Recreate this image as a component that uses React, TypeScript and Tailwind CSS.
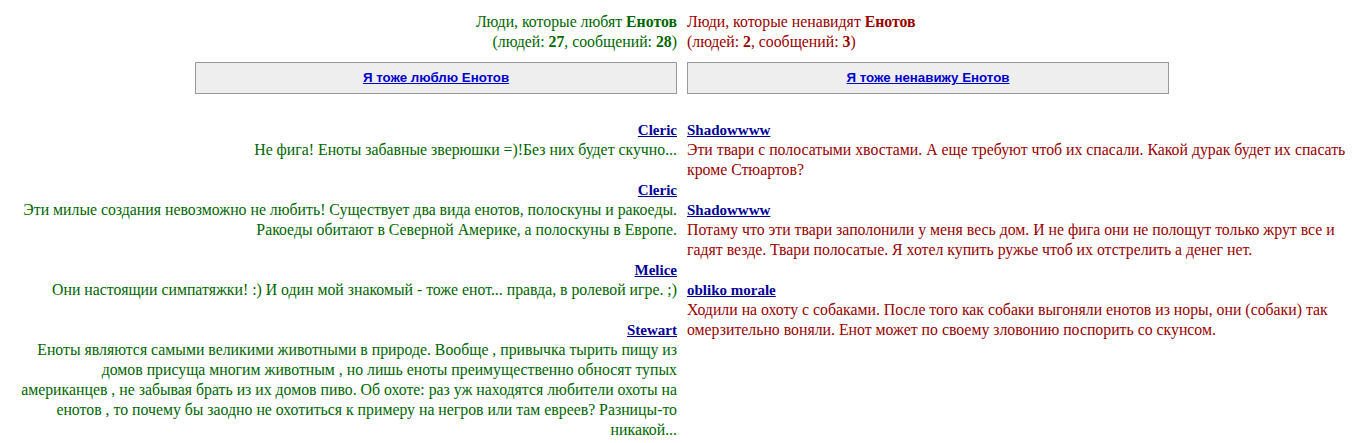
import React from 'react';

interface Comment {
  author: string;
  text: string;
}

const lovers: Comment[] = [
  { author: 'Cleric', text: 'Не фига! Еноты забавные зверюшки =)!Без них будет скучно...' },
  {
    author: 'Cleric',
    text: 'Эти милые создания невозможно не любить! Существует два вида енотов, полоскуны и ракоеды. Ракоеды обитают в Северной Америке, а полоскуны в Европе.',
  },
  { author: 'Melice', text: 'Они настоящии симпатяжки! :) И один мой знакомый - тоже енот... правда, в ролевой игре. ;)' },
  {
    author: 'Stewart',
    text: 'Еноты являются самыми великими животными в природе. Вообще , привычка тырить пищу из домов присуща многим животным , но лишь еноты преимущественно обносят тупых американцев , не забывая брать из их домов пиво. Об охоте: раз уж находятся любители охоты на енотов , то почему бы заодно не охотиться к примеру на негров или там евреев? Разницы-то никакой...',
  },
];

const haters: Comment[] = [
  {
    author: 'Shadowwww',
    text: 'Эти твари с полосатыми хвостами. А еще требуют чтоб их спасали. Какой дурак будет их спасать кроме Стюартов?',
  },
  {
    author: 'Shadowwww',
    text: 'Потаму что эти твари заполонили у меня весь дом. И не фига они не полощут только жрут все и гадят везде. Твари полосатые. Я хотел купить ружье чтоб их отстрелить а денег нет.',
  },
  {
    author: 'obliko morale',
    text: 'Ходили на охоту с собаками. После того как собаки выгоняли енотов из норы, они (собаки) так омерзительно воняли. Енот может по своему зловонию поспорить со скунсом.',
  },
];

function CommentList({ items, side }: { items: Comment[]; side: 'left' | 'right' }) {
  const isLeft = side === 'left';
  return (
    <div className={isLeft ? 'text-right' : 'text-left'}>
      {items.map((c, i) => (
        <div key={i} className="mb-[20px]">
          <a href="#" className="text-[15px] font-bold text-[#000099] underline">
            {c.author}
          </a>
          <div className={isLeft ? 'text-[#006600]' : 'text-[#990000]'}>{c.text}</div>
        </div>
      ))}
    </div>
  );
}

export default function App() {
  return (
    <div className="min-h-[443px] bg-white font-['Liberation_Serif','Times_New_Roman',serif] text-[15.8px] leading-[20px] pl-[14px] pr-[10px] pt-[12px]">
      {/* заголовки */}
      <div className="flex gap-[10px]">
        <div className="w-1/2 text-right text-[#006600]">
          Люди, которые любят <b>Енотов</b>
          <br />
          (людей: <b>27</b>, сообщений: <b>28</b>)
        </div>
        <div className="w-1/2 text-left text-[#990000]">
          Люди, которые ненавидят <b>Енотов</b>
          <br />
          (людей: <b>2</b>, сообщений: <b>3</b>)
        </div>
      </div>

      {/* кнопки */}
      <div className="flex gap-[10px] mt-[10px]">
        <div className="w-1/2 flex justify-end">
          <div className="w-[482px] h-[32px] bg-[#eeeeee] border border-[#999999] flex items-center justify-center">
            <a href="#" className="font-['Liberation_Sans',Arial,sans-serif] text-[13.3px] font-bold text-[#0000cc] underline">
              Я тоже люблю Енотов
            </a>
          </div>
        </div>
        <div className="w-1/2 flex justify-start">
          <div className="w-[482px] h-[32px] bg-[#eeeeee] border border-[#999999] flex items-center justify-center">
            <a href="#" className="font-['Liberation_Sans',Arial,sans-serif] text-[13.3px] font-bold text-[#0000cc] underline">
              Я тоже ненавижу Енотов
            </a>
          </div>
        </div>
      </div>

      {/* сообщения */}
      <div className="flex gap-[10px] mt-[26px]">
        <div className="w-1/2">
          <CommentList items={lovers} side="left" />
        </div>
        <div className="w-1/2">
          <CommentList items={haters} side="right" />
        </div>
      </div>
    </div>
  );
}
